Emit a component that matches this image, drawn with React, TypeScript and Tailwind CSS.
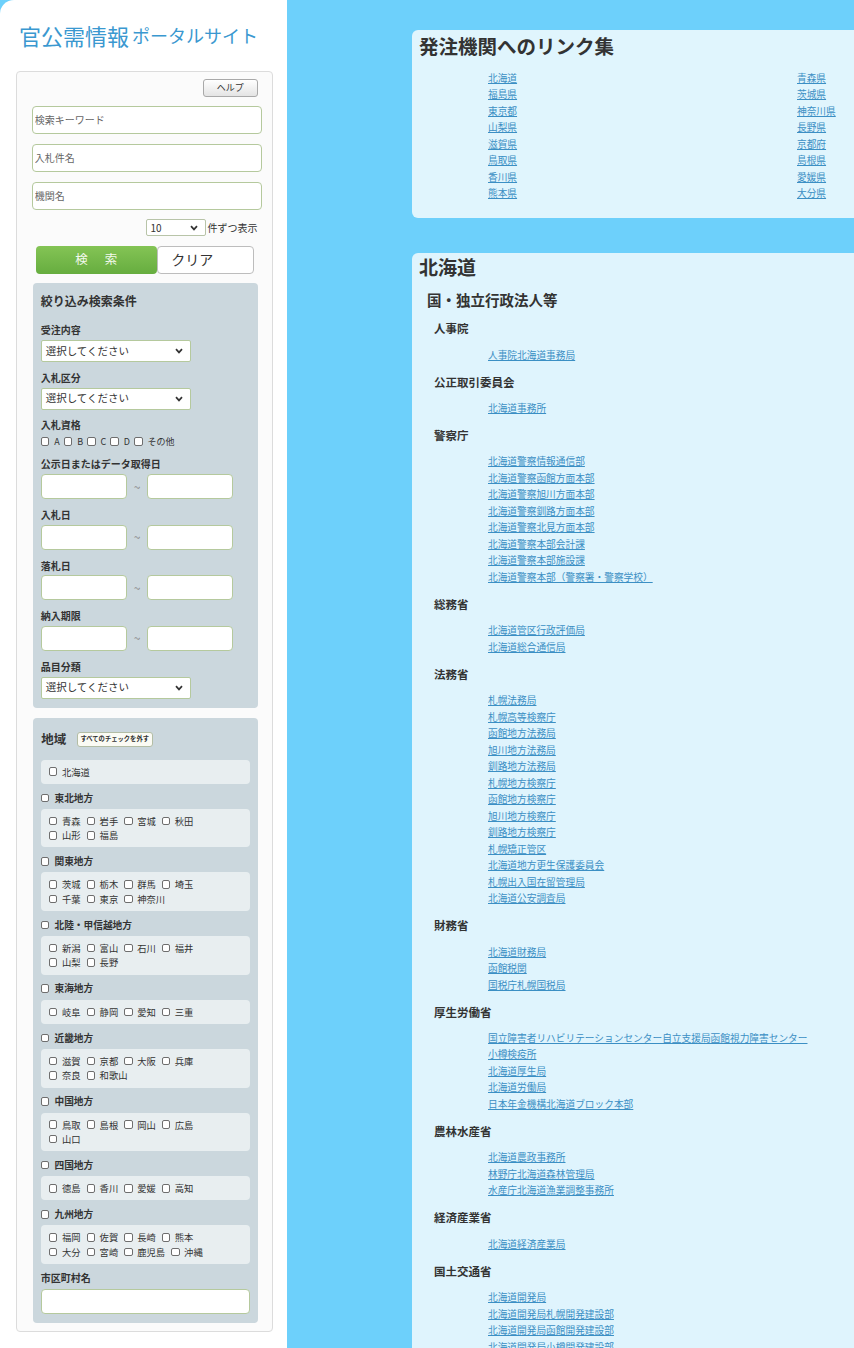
import React from "react";

const prefRows = [
  ["北海道", "青森県"],
  ["福島県", "茨城県"],
  ["東京都", "神奈川県"],
  ["山梨県", "長野県"],
  ["滋賀県", "京都府"],
  ["鳥取県", "島根県"],
  ["香川県", "愛媛県"],
  ["熊本県", "大分県"],
];

const regions = [
  { name: "東北地方", rows: [["青森", "岩手", "宮城", "秋田"], ["山形", "福島"]] },
  { name: "関東地方", rows: [["茨城", "栃木", "群馬", "埼玉"], ["千葉", "東京", "神奈川"]] },
  { name: "北陸・甲信越地方", rows: [["新潟", "富山", "石川", "福井"], ["山梨", "長野"]] },
  { name: "東海地方", rows: [["岐阜", "静岡", "愛知", "三重"]] },
  { name: "近畿地方", rows: [["滋賀", "京都", "大阪", "兵庫"], ["奈良", "和歌山"]] },
  { name: "中国地方", rows: [["鳥取", "島根", "岡山", "広島"], ["山口"]] },
  { name: "四国地方", rows: [["徳島", "香川", "愛媛", "高知"]] },
  { name: "九州地方", rows: [["福岡", "佐賀", "長崎", "熊本"], ["大分", "宮崎", "鹿児島", "沖縄"]] },
];

const agencies = [
  { name: "人事院", links: ["人事院北海道事務局"] },
  { name: "公正取引委員会", links: ["北海道事務所"] },
  {
    name: "警察庁",
    links: [
      "北海道警察情報通信部",
      "北海道警察函館方面本部",
      "北海道警察旭川方面本部",
      "北海道警察釧路方面本部",
      "北海道警察北見方面本部",
      "北海道警察本部会計課",
      "北海道警察本部施設課",
      "北海道警察本部（警察署・警察学校）",
    ],
  },
  { name: "総務省", links: ["北海道管区行政評価局", "北海道総合通信局"] },
  {
    name: "法務省",
    links: [
      "札幌法務局",
      "札幌高等検察庁",
      "函館地方法務局",
      "旭川地方法務局",
      "釧路地方法務局",
      "札幌地方検察庁",
      "函館地方検察庁",
      "旭川地方検察庁",
      "釧路地方検察庁",
      "札幌矯正管区",
      "北海道地方更生保護委員会",
      "札幌出入国在留管理局",
      "北海道公安調査局",
    ],
  },
  { name: "財務省", links: ["北海道財務局", "函館税関", "国税庁札幌国税局"] },
  {
    name: "厚生労働省",
    links: [
      "国立障害者リハビリテーションセンター自立支援局函館視力障害センター",
      "小樽検疫所",
      "北海道厚生局",
      "北海道労働局",
      "日本年金機構北海道ブロック本部",
    ],
  },
  { name: "農林水産省", links: ["北海道農政事務所", "林野庁北海道森林管理局", "水産庁北海道漁業調整事務所"] },
  { name: "経済産業省", links: ["北海道経済産業局"] },
  {
    name: "国土交通省",
    links: ["北海道開発局", "北海道開発局札幌開発建設部", "北海道開発局函館開発建設部", "北海道開発局小樽開発建設部"],
  },
];

function Chevron() {
  return (
    <svg width="8" height="6" viewBox="0 0 8 6" className="shrink-0">
      <polyline points="1,1.2 4,4.4 7,1.2" fill="none" stroke="#333" strokeWidth="1.7" />
    </svg>
  );
}

// fake select box: a div keeps the text and arrow where they belong
function SelectBox({ label, className, text }: { label: string; className: string; text: string }) {
  return (
    <div className={`flex items-center justify-between rounded-[2px] border bg-white pl-[4px] pr-[7px] ${className}`}>
      <span className={`${text} leading-none text-[#333]`}>{label}</span>
      <Chevron />
    </div>
  );
}

function Check() {
  return <input type="checkbox" className="m-0 h-[8.5px] w-[8.5px] shrink-0 appearance-none rounded-[2px] border border-[#6e6e6e] bg-white" />;
}

function FieldLabel({ children, first }: { children: React.ReactNode; first?: boolean }) {
  return (
    <div className={`${first ? "mt-[12.7px]" : "mt-[8.8px]"} text-[10px] font-bold leading-[14px] text-[#333]`}>{children}</div>
  );
}

function DateRange() {
  return (
    <div className="mt-[2.8px] flex items-center">
      <input className="h-[25px] w-[86.6px] rounded-[4px] border border-[#b5c99d] bg-white" />
      <span className="w-[19.4px] text-center text-[12px] leading-none text-[#8a8a8a]">~</span>
      <input className="h-[25px] w-[86.6px] rounded-[4px] border border-[#b5c99d] bg-white" />
    </div>
  );
}

function Item({ label }: { label: string }) {
  return (
    <span className="mr-[6px] inline-flex items-center">
      <Check />
      <span className="ml-[4.5px]">{label}</span>
    </span>
  );
}

export default function App() {
  return (
    <div className="flex min-h-[1348px] w-full overflow-hidden bg-[#6dd0fb] font-['Noto_Sans_CJK_JP','Noto_Sans',sans-serif] text-[#333]">
      <aside className="w-[287px] shrink-0 rounded-tl-[14px] bg-white">
        <h1 className="flex items-end pl-[19px] pt-[20px] leading-[30px] text-[#3a98d0]">
          <span className="text-[22px]">官公需情報</span>
          <span className="ml-[3px] text-[18px]">ポータルサイト</span>
        </h1>

        <div className="ml-[16px] mt-[20.7px] w-[257px] rounded-[4px] border border-[#dcdcdc] bg-[#fbfbfb] pb-[8.4px]">
          <div className="flex justify-end pr-[14.3px] pt-[7px]">
            <button className="h-[18px] w-[55px] rounded-[3px] border border-[#a9a9a9] bg-linear-to-b from-white to-[#e4e4e4] text-[9px] leading-none text-[#333]">
              ヘルプ
            </button>
          </div>

          <div className="ml-[15.3px] flex w-[230px] flex-col gap-[10px] pt-[9.3px]">
            {["検索キーワード", "入札件名", "機関名"].map((p) => (
              <input
                key={p}
                placeholder={p}
                className="h-[28px] w-full rounded-[4px] border border-[#b5c99d] bg-white px-[1.5px] text-[10px] text-[#333] placeholder:text-[#666]"
              />
            ))}
          </div>

          <div className="mt-[9.5px] flex items-center justify-end pr-[14.5px]">
            <SelectBox label="10" className="h-[17px] w-[60px] border-[#b8c4a8]" text="text-[10px]" />
            <span className="ml-[2px] text-[10px] leading-none text-[#333]">件ずつ表示</span>
          </div>

          <div className="ml-[18.7px] mt-[9.3px] flex h-[28px]">
            <button className="flex w-[121px] items-center justify-center gap-[17px] rounded-[4px] bg-linear-to-b from-[#84c455] to-[#66ad3f] text-[12.5px] text-[#f2f9ec]">
              <span>検</span>
              <span>索</span>
            </button>
            <button className="w-[97px] rounded-[4px] border border-[#bdbdbd] bg-white pr-[26px] text-[14px] text-[#333]">
              クリア
            </button>
          </div>

          <div className="ml-[16.3px] mt-[9px] w-[224.4px] rounded-[4px] bg-[#cbd7dd] px-[7.4px] pb-[9.4px] pt-[9.7px]">
            <div className="text-[12px] font-bold leading-[18px]">絞り込み検索条件</div>

            <FieldLabel first>受注内容</FieldLabel>
            <SelectBox label="選択してください" className="mt-[2.8px] h-[22px] w-[150px] border-[#b5c99d]" text="text-[10.5px]" />

            <FieldLabel>入札区分</FieldLabel>
            <SelectBox label="選択してください" className="mt-[2.8px] h-[22px] w-[150px] border-[#b5c99d]" text="text-[10.5px]" />

            <FieldLabel>入札資格</FieldLabel>
            <div className="mt-[1px] flex h-[16px] items-center text-[9px]">
              {["A", "B", "C", "D"].map((g) => (
                <span key={g} className="mr-[4px] inline-flex items-center">
                  <Check />
                  <span className="ml-[5px]">{g}</span>
                </span>
              ))}
              <span className="inline-flex items-center">
                <Check />
                <span className="ml-[5px]">その他</span>
              </span>
            </div>

            <div className="mt-[8px] text-[10px] font-bold leading-[14px]">公示日またはデータ取得日</div>
            <DateRange />
            <FieldLabel>入札日</FieldLabel>
            <DateRange />
            <FieldLabel>落札日</FieldLabel>
            <DateRange />
            <FieldLabel>納入期限</FieldLabel>
            <DateRange />

            <FieldLabel>品目分類</FieldLabel>
            <SelectBox label="選択してください" className="mt-[2.8px] h-[22px] w-[150px] border-[#b5c99d]" text="text-[10.5px]" />
          </div>

          <div className="ml-[16.3px] mt-[10px] w-[224.4px] rounded-[4px] bg-[#cbd7dd] px-[7.4px] pb-[9px] pt-[11.7px]">
            <div className="flex h-[20px] items-center">
              <span className="pl-[0.5px] text-[12.5px] font-bold">地域</span>
              <button className="ml-[10.5px] h-[15px] w-[76px] rounded-[3px] border border-[#b3bda5] bg-[#fbfbf4] text-[6.3px] font-bold leading-none text-[#333]">
                すべてのチェックを外す
              </button>
            </div>

            <div className="mt-[10px] rounded-[4px] bg-[#e8eef0] py-[5px] pl-[8.3px] text-[9.3px] leading-[14px]">
              <Item label="北海道" />
            </div>

            {regions.map((r) => (
              <div key={r.name}>
                <div className="mt-[7px] flex h-[14px] items-center pl-[0.3px]">
                  <Check />
                  <span className="ml-[5px] text-[9.7px] font-bold">{r.name}</span>
                </div>
                <div className="mt-[4px] rounded-[4px] bg-[#e8eef0] py-[5px] pl-[8.3px] text-[9.3px] leading-[14.3px]">
                  {r.rows.map((row, i) => (
                    <div key={i} className="flex">
                      {row.map((p) => (
                        <Item key={p} label={p} />
                      ))}
                    </div>
                  ))}
                </div>
              </div>
            ))}

            <div className="mt-[7px] text-[10px] font-bold leading-[14px]">市区町村名</div>
            <input className="mt-[4px] h-[25px] w-full rounded-[4px] border border-[#b5c99d] bg-white" />
          </div>
        </div>
      </aside>

      <main className="min-w-0 flex-1 pl-[125px] pt-[30px]">
        <section className="w-[700px] rounded-[6px] bg-[#e0f5fd] pb-[16.8px] pt-[3px]">
          <h2 className="pl-[7px] text-[19.5px] font-bold leading-[26px]">発注機関へのリンク集</h2>
          <div className="mt-[10.5px] grid grid-cols-[309px_auto] pl-[76px] text-[9.7px] leading-[16.5px]">
            {prefRows.flat().map((p) => (
              <a key={p} href="#" className="w-fit text-[#3b8fc4] underline">
                {p}
              </a>
            ))}
          </div>
        </section>

        <section className="mt-[34.4px] w-[700px] rounded-[6px] bg-[#dff4fd] pb-[20px] pt-[2px]">
          <h2 className="pl-[7px] text-[19px] font-bold leading-[24px]">北海道</h2>
          <h3 className="mt-[11px] pl-[15px] text-[14.5px] font-bold leading-[20px]">国・独立行政法人等</h3>
          <div className="pl-[22px]">
            {agencies.map((a) => (
              <div key={a.name} className="mt-[10.5px]">
                <h4 className="text-[11.5px] font-bold leading-[16px]">{a.name}</h4>
                <ul className="mt-[10.4px] pl-[54px] text-[9.7px] leading-[16.5px]">
                  {a.links.map((l) => (
                    <li key={l}>
                      <a href="#" className="text-[#3b8fc4] underline">
                        {l}
                      </a>
                    </li>
                  ))}
                </ul>
              </div>
            ))}
          </div>
        </section>
      </main>
    </div>
  );
}
